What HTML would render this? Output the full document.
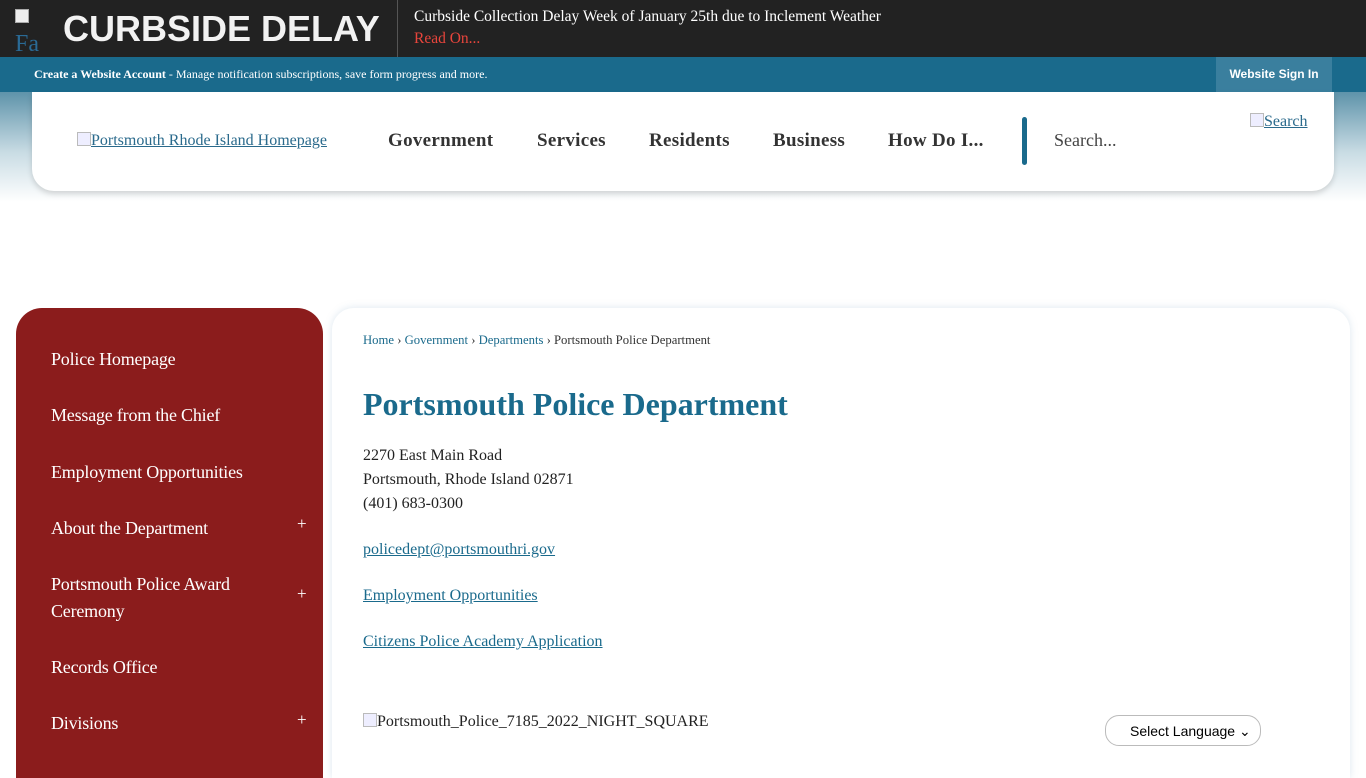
<!DOCTYPE html>
<html><head><meta charset="utf-8"><style>
*{margin:0;padding:0;box-sizing:border-box}
body{width:1366px;height:768px;overflow:hidden;background:#fff;font-family:"Liberation Serif",serif;position:relative}
.top{position:absolute;left:0;top:0;width:1366px;height:57px;background:#222}
.top .t{position:absolute;left:63px;top:8px;font:bold 36px "Liberation Sans",sans-serif;color:#f2f2f2}
.top .div{position:absolute;left:397px;top:0;width:1px;height:57px;background:#555}
.top .h{position:absolute;left:414px;top:8px;color:#fff;font-size:15.5px}
.top .r{position:absolute;left:414px;top:30px;color:#e8453c;font-size:15.5px}
.top .ic{position:absolute;left:15px;top:9px;width:14px;height:14px;border:1px solid #aaa;background:#eee}
.top .ic2{position:absolute;left:15px;top:32px;color:#2a6a95;font-size:24px;line-height:24px;height:20px;overflow:hidden}
.bar{position:absolute;left:0;top:57px;width:1366px;height:35px;background:#1a6a8c}
.bar .a{position:absolute;left:34px;top:10px;font-size:12px;color:#fff}
.bar .sign{position:absolute;left:1216px;top:0;width:116px;height:35px;background:#3a7f9e;color:#fff;font:bold 12px "Liberation Sans",sans-serif;text-align:center;line-height:35px}
.grad{position:absolute;left:0;top:92px;width:1366px;height:110px;background:linear-gradient(#5e93aa,#c9dce4 55%,#fff)}
.hdr{position:absolute;left:32px;top:92px;width:1302px;height:99px;background:#fff;border-radius:0 0 22px 22px;box-shadow:0 3px 6px rgba(0,0,0,.15)}
.hdr a{color:#2a6a8c}
.logo{position:absolute;left:45px;top:40px;font-size:16px;white-space:nowrap}
.nav{position:absolute;top:38px;font:bold 19px "Liberation Serif",serif;color:#333;letter-spacing:.3px}
.sep{position:absolute;left:990px;top:25px;width:5px;height:48px;background:#1a6a8c;border-radius:3px}
.srch{position:absolute;left:1022px;top:38px;font-size:18px;color:#444}
.slink{position:absolute;left:1218px;top:21px;font-size:16px;white-space:nowrap}
.bx{display:inline-block;width:14px;height:14px;border:1px solid #bbb;background:#eef;vertical-align:-1px}
.side{position:absolute;left:16px;top:308px;width:307px;height:470px;background:#8b1c1c;border-radius:26px 26px 0 0}
.side div{position:absolute;left:35px;color:#fff;font-size:18px;line-height:27px;letter-spacing:-.2px}
.side span{position:absolute;left:281px;color:#fff;font-size:17px}
.main{position:absolute;left:332px;top:308px;width:1018px;height:470px;background:#fff;border-radius:22px 22px 0 0;box-shadow:0 0 8px rgba(120,160,190,.25)}
.bc{position:absolute;left:31px;top:25px;font-size:12.7px;color:#333}
.bc a{color:#1a6a8c;text-decoration:none}
h1{position:absolute;left:31px;top:78px;font-size:32px;color:#1a6a8c;font-weight:bold}
.addr{position:absolute;left:31px;top:136px;font-size:16px;line-height:24px;color:#222}
.lk{position:absolute;left:31px;font-size:16px;color:#1a6a8c;text-decoration:underline}
.img{position:absolute;left:31px;top:405px;font-size:16px;color:#222;white-space:nowrap}
.sel{position:absolute;left:773px;top:407px;width:156px;height:31px;border:1px solid #bbb;border-radius:14px;font:14px "Liberation Sans",sans-serif;padding:7px 0 0 24px;color:#000}
</style></head><body>
<div class="top"><div class="ic"></div><div class="ic2">Fa</div><div class="t">CURBSIDE DELAY</div><div class="div"></div>
<div class="h">Curbside Collection Delay Week of January 25th due to Inclement Weather</div><div class="r">Read On...</div></div>
<div class="bar"><div class="a"><b>Create a Website Account</b> - Manage notification subscriptions, save form progress and more.</div><div class="sign">Website Sign In</div></div>
<div class="grad"></div>
<div class="hdr">
<a class="logo" href="#"><span class="bx"></span>Portsmouth Rhode Island Homepage</a>
<div class="nav" style="left:356px">Government</div>
<div class="nav" style="left:505px">Services</div>
<div class="nav" style="left:617px">Residents</div>
<div class="nav" style="left:741px">Business</div>
<div class="nav" style="left:856px">How Do I...</div>
<div class="sep"></div><div class="srch">Search...</div>
<a class="slink" href="#"><span class="bx"></span>Search</a>
</div>
<div class="side">
<div style="top:38px">Police Homepage</div>
<div style="top:94px">Message from the Chief</div>
<div style="top:151px">Employment Opportunities</div>
<div style="top:207px">About the Department</div><span style="top:206px">+</span>
<div style="top:263px">Portsmouth Police Award<br>Ceremony</div><span style="top:276px">+</span>
<div style="top:346px">Records Office</div>
<div style="top:402px">Divisions</div><span style="top:402px">+</span>
</div>
<div class="main">
<div class="bc"><a href="#">Home</a> › <a href="#">Government</a> › <a href="#">Departments</a> › Portsmouth Police Department</div>
<h1>Portsmouth Police Department</h1>
<div class="addr">2270 East Main Road<br>Portsmouth, Rhode Island 02871<br>(401) 683-0300</div>
<div class="lk" style="top:233px">policedept@portsmouthri.gov</div>
<div class="lk" style="top:279px">Employment Opportunities</div>
<div class="lk" style="top:325px">Citizens Police Academy Application</div>
<div class="img"><span class="bx"></span>Portsmouth_Police_7185_2022_NIGHT_SQUARE</div>
<div class="sel">Select Language ⌄</div>
</div>
</body></html>
